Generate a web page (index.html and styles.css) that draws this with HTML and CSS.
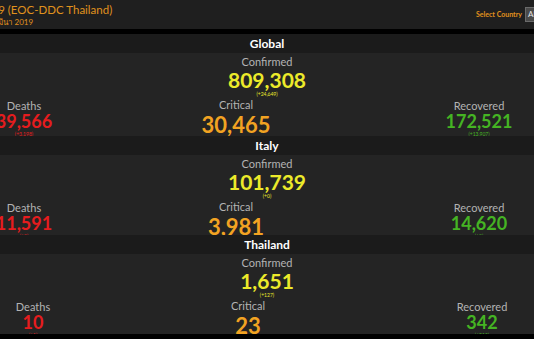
FILE: index.html
```html
<!DOCTYPE html>
<html lang="th">
<head>
    <meta charset="UTF-8">
    <meta name="viewport" content="width=device-width, initial-scale=1.0">
    <title>COVID-19 (EOC-DDC Thailand)</title>

    <link rel="stylesheet" href="styles.css">
</head>
<body>
    <header class="topbar">
        <div class="brand">
            <div class="brand-title">COVID-19 (EOC-DDC Thailand)</div>
            <div class="brand-date">ข้อมูล ณ วันที่ 31 มีนา 2019</div>
        </div>
        <div class="country-picker">
            <span class="picker-label">Select Country</span>
            <span class="picker-box">All</span>
        </div>
    </header>

    <section class="region region--first">
        <h2 class="region-title">Global</h2>
        <div class="stat confirmed">
            <div class="label">Confirmed</div>
            <div class="value">809,308</div>
            <div class="delta">(+24,649)</div>
        </div>
        <div class="stat-row">
            <div class="stat deaths">
                <div class="label">Deaths</div>
                <div class="value">39,566</div>
                <div class="delta">(+3,198)</div>
            </div>
            <div class="stat critical">
                <div class="label">Critical</div>
                <div class="value">30,465</div>
            </div>
            <div class="stat recovered">
                <div class="label">Recovered</div>
                <div class="value">172,521</div>
                <div class="delta">(+13,907)</div>
            </div>
        </div>
    </section>

    <section class="region">
        <h2 class="region-title">Italy</h2>
        <div class="stat confirmed">
            <div class="label">Confirmed</div>
            <div class="value">101,739</div>
            <div class="delta">(+0)</div>
        </div>
        <div class="stat-row">
            <div class="stat deaths">
                <div class="label">Deaths</div>
                <div class="value">11,591</div>
                <div class="delta">(+0)</div>
            </div>
            <div class="stat critical">
                <div class="label">Critical</div>
                <div class="value">3,981</div>
            </div>
            <div class="stat recovered">
                <div class="label">Recovered</div>
                <div class="value">14,620</div>
                <div class="delta">(+0)</div>
            </div>
        </div>
    </section>

    <section class="region">
        <h2 class="region-title">Thailand</h2>
        <div class="stat confirmed">
            <div class="label">Confirmed</div>
            <div class="value">1,651</div>
            <div class="delta">(+127)</div>
        </div>
        <div class="stat-row stat-row--small">
            <div class="stat deaths">
                <div class="label">Deaths</div>
                <div class="value">10</div>
                <div class="delta">(+1)</div>
            </div>
            <div class="stat critical">
                <div class="label">Critical</div>
                <div class="value">23</div>
            </div>
            <div class="stat recovered">
                <div class="label">Recovered</div>
                <div class="value">342</div>
                <div class="delta">(+215)</div>
            </div>
        </div>
    </section>
</body>
</html>
```

FILE: styles.css
```css
:root {
    --header-bg: #1f1f1f;
    --panel-bg: #242424;
    --bar-bg: #1b1b1b;
    --brand-color: #e0921d;
    --label-color: #b3b3b3;
    --confirmed-color: #ecea2a;
    --critical-color: #f2a322;
    --deaths-color: #e61c1e;
    --recovered-color: #45b423;
}

body {
    margin: 0;
    background: #000;
    font-family: Lato, "Noto Sans", "DejaVu Sans", sans-serif;
    overflow: hidden;
}

/* barra in alto */
.topbar {
    height: 29px;
    margin-bottom: 5px;
    background: var(--header-bg);
    display: flex;
    justify-content: space-between;
    overflow: hidden;
}

.brand {
    padding-top: 3px;
    color: var(--brand-color);
    white-space: nowrap;
}

.brand-title {
    font-size: 11.5px;
    line-height: 14px;
    margin-left: -49px;
}

.brand-date {
    font-size: 8px;
    line-height: 10px;
    margin-left: -60px;
}

.country-picker {
    display: flex;
    align-items: center;
    gap: 3px;
    margin-right: -31px;
    padding-bottom: 1px;
}

.picker-label {
    color: var(--brand-color);
    font-size: 7px;
    font-weight: bold;
}

.picker-box {
    width: 36px;
    height: 13px;
    line-height: 13px;
    padding-left: 2px;
    background: #4a4a4a;
    border: 1px solid #6a6a6a;
    color: #e6e6e6;
    font-size: 8px;
}

/* sezioni */
.region {
    height: 99px;
    background: var(--panel-bg);
    overflow: hidden;
}

.region--first {
    height: 102px;
}

.region-title {
    margin: 0 0 2px;
    height: 19px;
    line-height: 19px;
    background: var(--bar-bg);
    color: #fff;
    font-size: 12px;
    font-weight: bold;
    text-align: center;
}

.stat {
    text-align: center;
    white-space: nowrap;
}

.label {
    color: var(--label-color);
    font-size: 11px;
    line-height: 13px;
}

.value {
    font-weight: bold;
}

.delta {
    font-size: 5px;
    line-height: 7px;
}

.confirmed .value {
    font-size: 21px;
    line-height: 23px;
}

.confirmed,
.confirmed .delta {
    color: var(--confirmed-color);
}

.stat-row {
    display: grid;
    grid-template-columns: 200px 224px 262px;
    align-items: start;
    margin-left: -76px;
}

.stat-row--small {
    grid-template-columns: 218px 212px 256px;
}

.deaths,
.recovered {
    padding-top: 1px;
}

.deaths .value,
.recovered .value {
    font-size: 18px;
    line-height: 19px;
}

.critical .value {
    font-size: 22px;
    line-height: 27px;
    color: var(--critical-color);
}

.deaths .value,
.deaths .delta {
    color: var(--deaths-color);
}

.recovered .value,
.recovered .delta {
    color: var(--recovered-color);
}
```
